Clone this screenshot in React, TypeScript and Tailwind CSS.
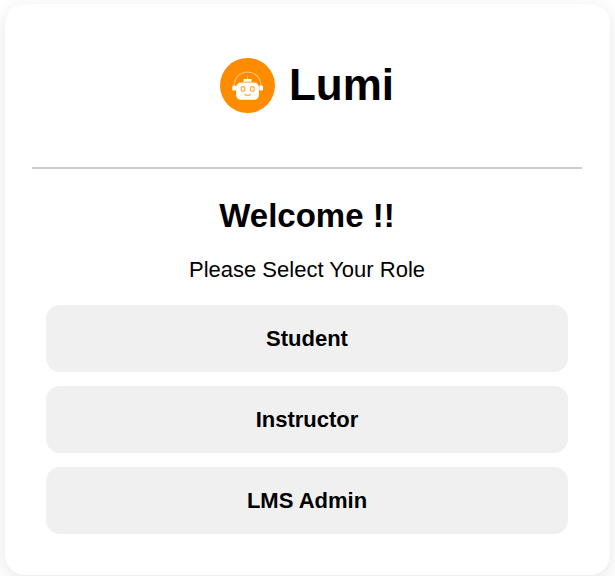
import React from "react";

const roles = ["Student", "Instructor", "LMS Admin"];

function Logo() {
  return (
    <svg className="h-[55px] w-[55px]" viewBox="0 0 55 55" fill="none">
      <circle cx="27.5" cy="27.5" r="27.5" fill="#ff8c00" />
      <path d="M14.2 28V27.2A13.4 13.2 0 0 1 41 27.2V28" stroke="#ffc27a" strokeWidth="1.1" />
      <path d="M27.5 17.500V21" stroke="#ffc27a" strokeWidth="1" />
      <rect x="23.600" y="21" width="8" height="2.800" rx="0.500" fill="#fff" />
      <rect x="12.300" y="27.600" width="3.700" height="5" rx="1.200" fill="#fff" />
      <rect x="39.300" y="27.600" width="3.700" height="5" rx="1.200" fill="#fff" />
      <rect x="16.100" y="24.500" width="22.800" height="17.300" rx="4.800" fill="#fff" />
      <ellipse cx="23" cy="30.900" rx="1.900" ry="2.300" stroke="#ffa742" strokeWidth="1.1" />
      <ellipse cx="32.300" cy="30.900" rx="1.900" ry="2.300" stroke="#ffa742" strokeWidth="1.1" />
      <path d="M24.300 36.500Q27.600 38.100 30.900 36.500" stroke="#ffa03a" strokeWidth="1.1" />
    </svg>
  );
}

export default function App() {
  return (
    <main className="h-[576px] w-[615px] overflow-hidden bg-white pt-1 pr-[5px] pl-[5px] font-['Liberation_Sans',Arial,sans-serif] text-black">
      <section className="flex h-[571px] flex-col rounded-[20px] bg-white pt-[54px] pr-7 pl-[27px] shadow-[0_5px_20px_rgba(0,0,0,0.1)]">
        <header className="flex h-[55px] items-center justify-center gap-[14px]">
          <Logo />
          <h1 className="-mt-0.5 text-[44px] leading-[55px] font-bold">Lumi</h1>
        </header>
        <hr className="mt-[54px] border-t-2 border-[#ccc]" />
        <h2 className="mt-[27px] text-center text-[33px] leading-[40px] font-bold">Welcome !!</h2>
        <p className="mt-[21px] text-center text-[22px] leading-[26px]">Please Select Your Role</p>
        <div className="mt-[22px] flex flex-col gap-[14px] px-[14px]">
          {roles.map((role) => (
            <button key={role} className="h-[67px] rounded-[14px] bg-[#f0f0f0] text-[22px] font-bold">{role}</button>
          ))}
        </div>
      </section>
    </main>
  );
}
